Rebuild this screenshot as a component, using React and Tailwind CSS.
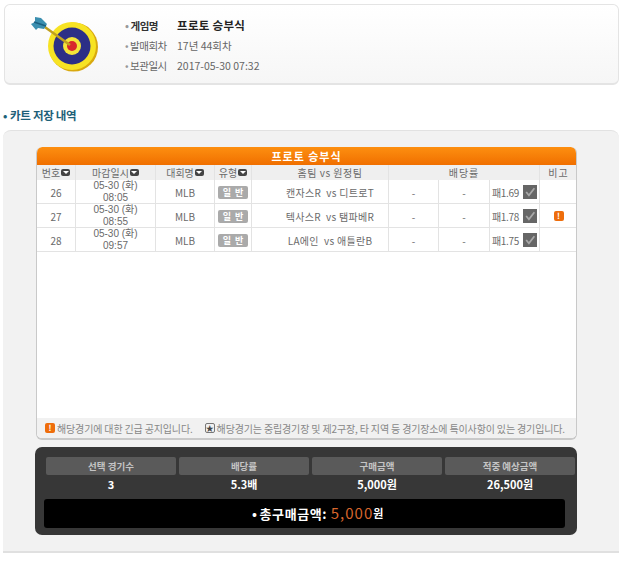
const COLS = "grid grid-cols-[39px_80px_59px_37px_137px_50px_51px_50px_37px]";

function Arrow() {
  return (
    <span className="inline-flex w-[9px] h-[7px] bg-[#444] rounded-[2px] items-center justify-center ml-px">
      <span className="w-0 h-0 border-l-[3px] border-r-[3px] border-t-[3px] border-l-transparent border-r-transparent border-t-white" />
    </span>
  );
}

function Target() {
  return (
    <svg width="72" height="62" viewBox="0 0 72 62">
      <ellipse cx="46.500" cy="32" rx="24.500" ry="24.500" fill="#d9a90f" />
      <ellipse cx="45" cy="31" rx="24" ry="24" fill="#f7e323" />
      <circle cx="45" cy="31" r="18.500" fill="#2c2f86" />
      <circle cx="45" cy="31" r="9" fill="#f4e43a" />
      <circle cx="45" cy="31" r="5" fill="#d8262c" />
      <path d="M15 10 L43 30" stroke="#c0a020" strokeWidth="2.500" />
      <path d="M8 2 L14 3 L20 9 L17 14 L11 13 L9 15 L4 9 L8 7 Z" fill="#3b8fb0" />
      <path d="M7 7 L19 11" stroke="#1c5f80" strokeWidth="1.500" />
    </svg>
  );
}

function Check() {
  return (
    <span className="inline-flex w-[14px] h-[14px] bg-[#666] items-center justify-center ml-1">
      <svg width="12" height="12" viewBox="0 0 11 11">
        <path d="M2 5.500 L4.500 8.500 L9.500 2" fill="none" stroke="#a8a8a8" strokeWidth="1.600" />
      </svg>
    </span>
  );
}

function Alert({ className = "" }) {
  return (
    <span className={`inline-flex w-[10px] h-[10px] rounded-[2px] bg-[#ee6d0b] text-white text-[8px] font-bold items-center justify-center leading-none ${className}`}>!</span>
  );
}

function Cell({ children, className = "" }) {
  return (
    <div className={`flex items-center justify-center text-center border-r border-[#e3e3e3] text-[#6a6a6a] text-[10px] leading-[11px] ${className}`}>
      {children}
    </div>
  );
}

const rows = [
  { no: "26", time: "08:05", home: "캔자스R", away: "디트로T", odd: "1.69" },
  { no: "27", time: "08:55", home: "텍사스R", away: "탬파베R", odd: "1.78", alert: true },
  { no: "28", time: "09:57", home: "LA에인", away: "애틀란B", odd: "1.75" },
];

function Info({ label, bold, children }) {
  return (
    <div className="flex items-center h-[20px]">
      <span className={`w-[52px] text-[10.500px] tracking-[-0.500px] ${bold ? "font-bold text-[#333]" : "text-[#666]"}`}>
        <span className="text-[#999] mr-[2px]">•</span>{label}
      </span>
      {children}
    </div>
  );
}

function Stat({ label, value }) {
  return (
    <div className="flex-1 flex flex-col">
      <div className="h-[18px] bg-[#5a5a5a] rounded-[2px] text-[#c4c4c4] text-[9.500px] font-bold flex items-center justify-center">{label}</div>
      <div className="h-[18px] text-white text-[11px] font-bold flex items-center justify-center">{value}</div>
    </div>
  );
}

export default function App() {
  return (
    <div className="font-[family-name:'Noto_Sans_CJK_KR','Liberation_Sans',sans-serif] w-[633px] h-[567px] bg-white overflow-hidden pt-1 pl-[4px]">
      <div className="w-[615px] h-[81px] border border-[#e4e4e4] border-b-2 rounded-[6px] bg-gradient-to-b from-white to-[#f6f6f6] flex items-center">
        <div className="ml-[22px] mt-[4px] w-[98px]">
          <Target />
        </div>
        <div className="flex flex-col mt-[4px]">
          <Info label="게임명" bold>
            <span className="text-[11.500px] font-bold text-[#222] tracking-[0.300px]">프로토 승부식</span>
          </Info>
          <Info label="발매회차">
            <span className="text-[10.500px] text-[#666]">17년 44회차</span>
          </Info>
          <Info label="보관일시">
            <span className="text-[10.500px] text-[#666]">2017-05-30 07:32</span>
          </Info>
        </div>
      </div>

      <div className="h-[45px] flex items-end pb-[6px] -ml-[1px] text-[11.500px] font-bold text-[#1d6078] tracking-[-0.300px]">
        <span className="mr-[3px]">•</span>카트 저장 내역
      </div>

      <div className="w-[616px] -ml-[1px] h-[423px] bg-[#f2f2f2] border-t border-[#e2e2e2] rounded-t-[8px] border-b-2 border-b-[#e0e0e0] pt-[16px] pl-[33px]">
        <div className="w-[541px] h-[293px] bg-white rounded-[6px] border-r border-b-2 border-l border-[#c9c9c9] flex flex-col overflow-hidden">
          <div className="h-[18px] -mx-px bg-gradient-to-b from-[#fd8f10] to-[#f06f00] rounded-t-[6px] text-center text-white text-[11px] font-bold leading-[18px] tracking-[1px]">
            프로토 승부식
          </div>
          <div className={`${COLS} h-[15px] bg-[#efefef]`}>
            <Cell className="text-[10.500px]">번호<Arrow /></Cell>
            <Cell className="text-[10.500px]">마감일시<Arrow /></Cell>
            <Cell className="text-[10.500px]">대회명<Arrow /></Cell>
            <Cell className="text-[10.500px]">유형<Arrow /></Cell>
            <Cell className="text-[10.500px] pl-[20px] tracking-[0.500px]">홈팀 vs 원정팀</Cell>
            <Cell className="text-[10.500px] col-span-3 tracking-[1px]">배당률</Cell>
            <Cell className="text-[10.500px] border-r-0 tracking-[1px]">비고</Cell>
          </div>
          {rows.map((r) => (
            <div key={r.no} className={`${COLS} h-[24px] border-b border-[#e3e3e3]`}>
              <Cell>{r.no}</Cell>
              <Cell className="font-[family-name:'Liberation_Sans','Noto_Sans_CJK_KR',sans-serif] leading-[12px]">
                <span>05-30 (화)<br />{r.time}</span>
              </Cell>
              <Cell>MLB</Cell>
              <Cell>
                <span className="w-[30px] h-[13px] bg-[#aaaaaa] rounded-[2px] text-white text-[9px] leading-none font-bold flex items-center justify-center">일&nbsp;&nbsp;반</span>
              </Cell>
              <Cell className="pl-[20px] tracking-[0.300px] whitespace-nowrap">{r.home}&nbsp;&nbsp;vs&nbsp;{r.away}</Cell>
              <Cell>-</Cell>
              <Cell>-</Cell>
              <Cell className="tracking-[-0.300px]">패{r.odd}<Check /></Cell>
              <Cell className="border-r-0">{r.alert && <Alert />}</Cell>
            </div>
          ))}
          <div className="flex-1" />
          <div className="h-[20px] bg-[#f1f1f1] flex items-center pl-[8px] text-[#888] text-[10px] tracking-[-0.150px] whitespace-nowrap">
            <Alert className="mr-[2px]" />
            <span>해당경기에 대한 긴급 공지입니다.</span>
            <span className="ml-[12px] mr-[2px] w-[10px] h-[10px] border border-[#777] rounded-[2px] text-[#444] text-[8px] leading-none flex items-center justify-center">★</span>
            <span>해당경기는 중립경기장 및 제2구장, 타 지역 등 경기장소에 특이사항이 있는 경기입니다.</span>
          </div>
        </div>

        <div className="w-[542px] -ml-[1px] h-[88px] mt-[7px] bg-[#373737] rounded-[7px] pt-[10px] pl-[11px] pr-[2px]">
          <div className="flex gap-[3px]">
            <Stat label="선택 경기수" value="3" />
            <Stat label="배당률" value="5.3배" />
            <Stat label="구매금액" value="5,000원" />
            <Stat label="적중 예상금액" value="26,500원" />
          </div>
          <div className="h-[29px] mt-[6px] -ml-[2px] mr-[10px] pl-[27px] bg-black rounded-[3px] flex items-center justify-center text-white font-bold text-[13px] tracking-[0.600px]">
            <span className="mr-[2px]">•</span>총구매금액:&nbsp;<span className="text-[#d8662c] text-[15px] font-normal tracking-[1px]">5,000</span><span className="text-[11px]">원</span>
          </div>
        </div>
      </div>
    </div>
  );
}
